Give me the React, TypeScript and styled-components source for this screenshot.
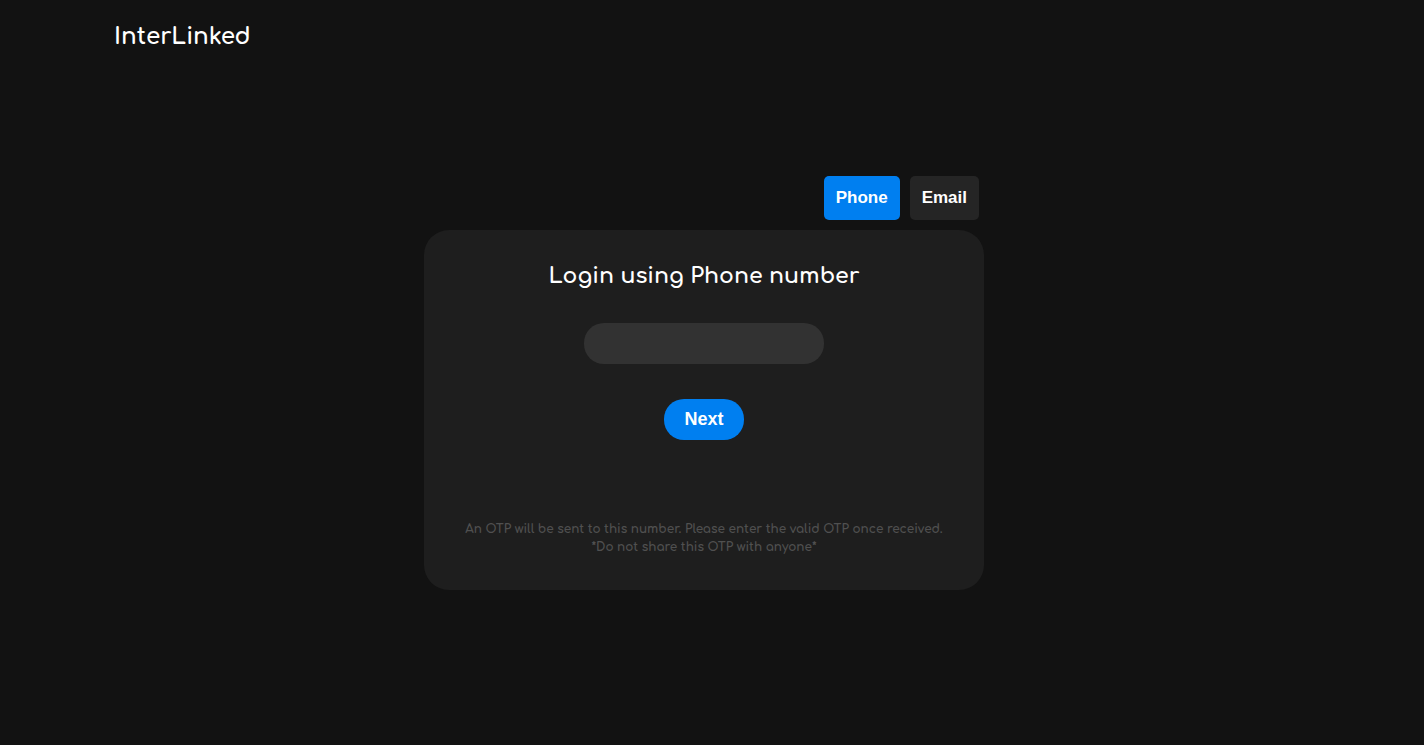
import React, { useState } from "react";
import styled, { createGlobalStyle } from "styled-components";

const GlobalStyle = createGlobalStyle`
  *, *::before, *::after { box-sizing: border-box; }
  body {
    margin: 0;
    background: #121212;
    color: #ffffff;
    font-family: Comfortaa, Inter, sans-serif;
  }
`;

const Page = styled.div`
  min-height: 100vh;
  padding-right: 16px;
`;

const Header = styled.header`
  padding: 20px 114px;
`;

const Logo = styled.a`
  display: inline-block;
  color: inherit;
  font-size: 23px;
  font-weight: 700;
  line-height: 34px;
  text-decoration: none;
`;

const Main = styled.main`
  width: 100%;
  max-width: 560px;
  margin: 102px auto 0;
`;

const Tabs = styled.div`
  display: flex;
  justify-content: flex-end;
  gap: 10px;
  padding: 0 5px 10px;
`;

const TabButton = styled.button<{ $active: boolean }>`
  height: 44px;
  padding: 0 12px;
  border: 0;
  border-radius: 5px;
  background: ${({ $active }) => ($active ? "#007ff0" : "#252525")};
  color: #ffffff;
  font: bold 17px "Liberation Sans", sans-serif;
  cursor: pointer;
`;

const Card = styled.form`
  display: flex;
  flex-direction: column;
  align-items: center;
  padding: 30px 30px 34px;
  border-radius: 25px;
  background: #1e1e1e;
`;

const Title = styled.h1`
  margin: 0;
  font-size: 22px;
  font-weight: 700;
  line-height: 32px;
`;

const Field = styled.input`
  width: 240px;
  height: 41px;
  margin-top: 31px;
  padding: 0 20px;
  border: 0;
  border-radius: 20px;
  outline: none;
  background: #323232;
  color: #ffffff;
  font: 18px "Liberation Sans", sans-serif;
`;

const NextButton = styled.button`
  width: 80px;
  height: 41px;
  margin-top: 35px;
  padding: 0;
  border: 0;
  border-radius: 20px;
  background: #007ff0;
  color: #ffffff;
  font: bold 18px "Liberation Sans", sans-serif;
  cursor: pointer;
`;

const Note = styled.p`
  margin: 80px 0 0;
  color: #505050;
  font-size: 12px;
  font-weight: 700;
  line-height: 18px;
  text-align: center;
`;

type Method = "phone" | "email";

const content = {
  phone: { title: "Login using Phone number", target: "number", type: "tel" },
  email: { title: "Login using Email", target: "email", type: "email" },
};

export default function App() {
  const [method, setMethod] = useState<Method>("phone");
  const { title, target, type } = content[method];

  return (
    <Page>
      <GlobalStyle />
      <Header>
        <Logo href="/">InterLinked</Logo>
      </Header>
      <Main>
        <Tabs>
          <TabButton
            type="button"
            $active={method === "phone"}
            aria-pressed={method === "phone"}
            onClick={() => setMethod("phone")}
          >
            Phone
          </TabButton>
          <TabButton
            type="button"
            $active={method === "email"}
            aria-pressed={method === "email"}
            onClick={() => setMethod("email")}
          >
            Email
          </TabButton>
        </Tabs>
        <Card onSubmit={(event) => event.preventDefault()}>
          <Title>
            <label htmlFor="contact">{title}</label>
          </Title>
          <Field id="contact" type={type} />
          <NextButton type="submit">Next</NextButton>
          <Note>
            An OTP will be sent to this {target}. Please enter the valid OTP once received.
            <br />
            *Do not share this OTP with anyone*
          </Note>
        </Card>
      </Main>
    </Page>
  );
}
